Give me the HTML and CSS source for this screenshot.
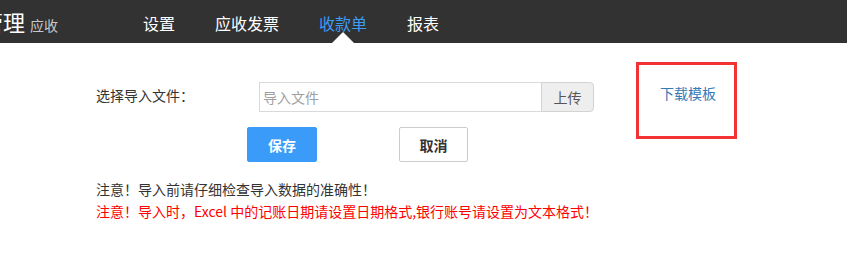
FILE: index.html
```html
<!DOCTYPE html>
<html lang="zh-CN">
<head>
<meta charset="utf-8">
<title>收款单导入</title>
<link rel="stylesheet" href="styles.css">
</head>
<body>
<header class="topbar">
  <div class="brand"><span class="brand-main">管理</span><span class="brand-sub">应收</span></div>
  <nav class="nav">
    <a class="nav-item">设置</a>
    <a class="nav-item">应收发票</a>
    <a class="nav-item active">收款单</a>
    <a class="nav-item">报表</a>
  </nav>
</header>
<main class="content">
  <div class="row-file">
    <label class="field-label">选择导入文件：</label>
    <div class="input-group">
      <input class="file-input" type="text" placeholder="导入文件">
      <button class="btn-upload" type="button">上传</button>
    </div>
    <a class="download">下载模板</a>
  </div>
  <div class="row-actions">
    <button class="btn btn-save" type="button">保存</button>
    <button class="btn btn-cancel" type="button">取消</button>
  </div>
  <div class="notes">
    <p class="note">注意！导入前请仔细检查导入数据的准确性！</p>
    <p class="note note-red">注意！导入时，Excel 中的记账日期请设置日期格式,银行账号请设置为文本格式！</p>
  </div>
</main>
</body>
</html>
```
FILE: styles.css
```css
* { box-sizing: border-box; }
html, body { margin: 0; padding: 0; background: #fff; }
body {
  font-family: "Noto Sans CJK SC", "Microsoft YaHei", "Liberation Sans", sans-serif;
  font-size: 14px;
  color: #333;
  overflow: hidden;
}
.topbar {
  height: 43px;
  background: #323232;
  display: flex;
  align-items: center;
}
.brand {
  margin-left: -19px;
  display: flex;
  align-items: baseline;
  width: 142px;
  white-space: nowrap;
}
.brand-main {
  font-size: 22px;
  color: #fff;
  line-height: 43px;
}
.brand-sub {
  font-size: 14px;
  color: #c8c8c8;
  margin-left: 5px;
}
.nav {
  display: flex;
  height: 43px;
}
.nav-item {
  position: relative;
  display: flex;
  align-items: center;
  padding: 3px 20px 0;
  font-size: 16px;
  color: #fff;
  line-height: 40px;
}
.nav-item.active { color: #3d9cf6; }
.nav-item.active::after {
  content: "";
  position: absolute;
  left: 50%;
  bottom: 0;
  margin-left: -11px;
  border-left: 11px solid transparent;
  border-right: 11px solid transparent;
  border-bottom: 11px solid #fff;
}
.content {
  padding: 39px 0 0 96px;
}
.row-file {
  display: flex;
  align-items: center;
  height: 30px;
}
.field-label {
  width: 163px;
  line-height: 20px;
  margin-top: -5px;
}
.input-group {
  display: flex;
  width: 335px;
  height: 30px;
}
.file-input {
  width: 282px;
  height: 30px;
  border: 1px solid #d9d9d9;
  border-right: none;
  padding: 0 3px;
  font-family: inherit;
  font-size: 14px;
  color: #333;
  outline: none;
  line-height: 28px;
}
.file-input::placeholder { color: #a0a0a0; }
.btn-upload {
  width: 53px;
  height: 30px;
  border: 1px solid #d3d3d3;
  border-radius: 0 4px 4px 0;
  background: #eee;
  font-family: inherit;
  font-size: 14px;
  color: #555;
  padding: 0;
}
.download {
  position: relative;
  margin-left: 66px;
  color: #337ab7;
  line-height: 20px;
  margin-top: -8px;
}
.download::after {
  content: "";
  position: absolute;
  left: -24px;
  right: -21px;
  top: -21px;
  bottom: -36px;
  border: 3px solid #f33333;
}
.row-actions {
  display: flex;
  margin: 15px 0 0 151px;
  gap: 82px;
}
.btn {
  height: 35px;
  font-family: inherit;
  font-size: 14px;
  font-weight: bold;
  padding: 0;
  border-radius: 2px;
}
.btn-save {
  width: 70px;
  background: #3a9bf8;
  border: 1px solid #3a9bf8;
  color: #fff;
}
.btn-cancel {
  width: 69px;
  background: #fff;
  border: 1px solid #ccc;
  color: #333;
}
.notes { margin-top: 16px; }
.note {
  margin: 0;
  line-height: 22px;
  white-space: nowrap;
}
.note-red { color: #f00; }
```
